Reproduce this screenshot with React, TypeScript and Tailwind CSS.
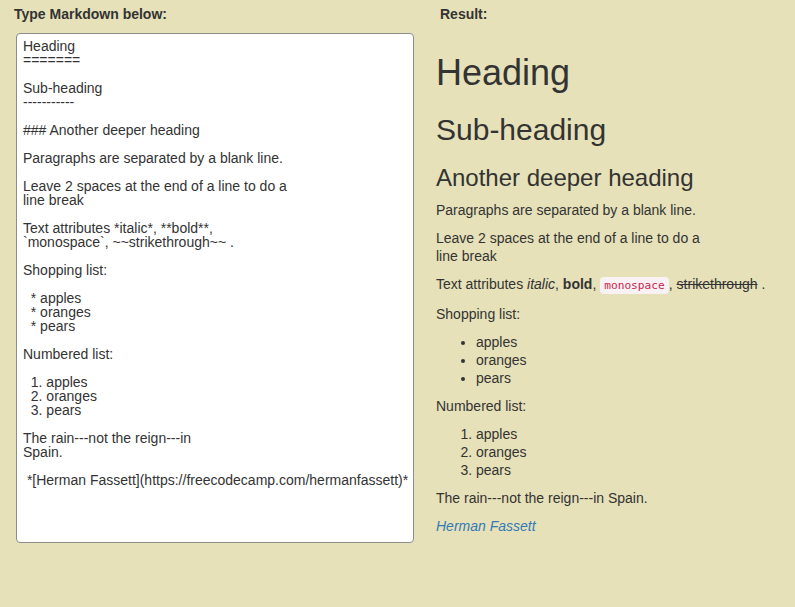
import React from "react";

const source = `Heading
=======

Sub-heading
-----------

### Another deeper heading

Paragraphs are separated by a blank line.

Leave 2 spaces at the end of a line to do a
line break

Text attributes *italic*, **bold**,
\`monospace\`, ~~strikethrough~~ .

Shopping list:

  * apples
  * oranges
  * pears

Numbered list:

  1. apples
  2. oranges
  3. pears

The rain---not the reign---in
Spain.

 *[Herman Fassett](https://freecodecamp.com/hermanfassett)*`;

export default function App() {
  return (
    <div className="min-h-screen bg-[#e6e1b8] text-[#333] font-['Liberation_Sans',Arial,sans-serif] text-[14px]">
      <div className="flex px-[14px] pt-[4px]">
        {/* editor */}
        <div className="w-[399px] shrink-0">
          <h4 className="font-bold leading-[20px] text-[14px]">Type Markdown below:</h4>
          <textarea
            defaultValue={source}
            wrap="off"
            spellCheck={false}
            className="ml-[2px] mt-[9px] block h-[510px] w-[398px] resize-none overflow-hidden rounded-[4px] border border-[#8c8c8c] bg-white pl-[6px] pr-[2px] pt-[5px] text-[14px] leading-[14px] text-[#333] outline-none"
          />
        </div>

        {/* preview */}
        <div className="ml-[23px] flex-1">
          <h4 className="pl-[4px] font-bold leading-[20px] text-[14px]">Result:</h4>
          <div className="leading-[18px]">
            <h1 className="mt-[29px] mb-[10px] text-[36px] leading-[1.1]">Heading</h1>
            <h2 className="mt-[20px] mb-[10px] text-[30px] leading-[1.1]">Sub-heading</h2>
            <h3 className="mt-[19px] mb-[10px] text-[24px] leading-[1.1]">Another deeper heading</h3>
            <p className="mb-[10px]">Paragraphs are separated by a blank line.</p>
            <p className="mb-[10px]">
              Leave 2 spaces at the end of a line to do a
              <br />
              line break
            </p>
            <p className="mb-[10px]">
              Text attributes <em>italic</em>, <strong>bold</strong>,{" "}
              <code className="rounded-[4px] bg-[#f9f2f4] px-[4px] py-[2px] font-['DejaVu_Sans_Mono',monospace] text-[11.2px] text-[#c7254e]">
                monospace
              </code>
              , <del>strikethrough</del> .
            </p>
            <p className="mb-[10px]">Shopping list:</p>
            <ul className="mb-[10px] list-disc pl-[40px]">
              <li>apples</li>
              <li>oranges</li>
              <li>pears</li>
            </ul>
            <p className="mb-[10px]">Numbered list:</p>
            <ol className="mb-[10px] list-decimal pl-[40px]">
              <li>apples</li>
              <li>oranges</li>
              <li>pears</li>
            </ol>
            <p className="mb-[10px]">The rain---not the reign---in Spain.</p>
            <p>
              <em>
                <a href="https://freecodecamp.com/hermanfassett" className="text-[#337ab7]">
                  Herman Fassett
                </a>
              </em>
            </p>
          </div>
        </div>
      </div>
    </div>
  );
}
